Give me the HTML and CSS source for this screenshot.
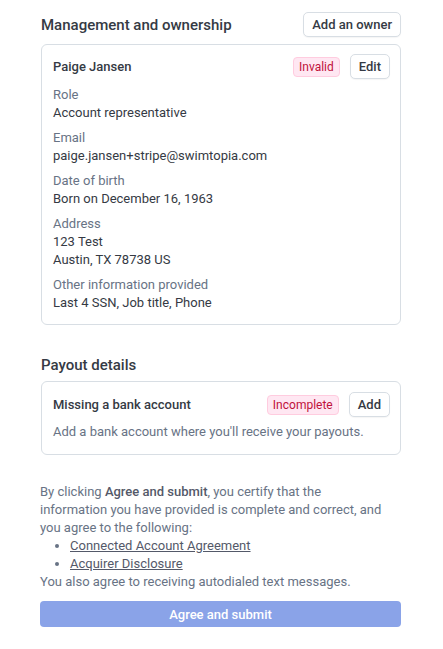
FILE: index.html
```html
<!DOCTYPE html>
<html lang="en">
<head>
<meta charset="utf-8">
<link rel="stylesheet" href="styles.css">
</head>
<body>
<main class="page">
  <section class="section">
    <div class="section-head">
      <h2 class="section-title">Management and ownership</h2>
      <button class="btn">Add an owner</button>
    </div>
    <div class="card">
      <div class="card-head">
        <div class="card-title">Paige Jansen</div>
        <div class="card-actions">
          <span class="badge">Invalid</span>
          <button class="btn">Edit</button>
        </div>
      </div>
      <div class="fields">
        <div class="field">
          <div class="label">Role</div>
          <div class="value">Account representative</div>
        </div>
        <div class="field">
          <div class="label">Email</div>
          <div class="value">paige.jansen+stripe@swimtopia.com</div>
        </div>
        <div class="field">
          <div class="label">Date of birth</div>
          <div class="value">Born on December 16, 1963</div>
        </div>
        <div class="field">
          <div class="label">Address</div>
          <div class="value">123 Test</div>
          <div class="value">Austin, TX 78738 US</div>
        </div>
        <div class="field">
          <div class="label">Other information provided</div>
          <div class="value">Last 4 SSN, Job title, Phone</div>
        </div>
      </div>
    </div>
  </section>

  <section class="section payout">
    <div class="section-head">
      <h2 class="section-title">Payout details</h2>
    </div>
    <div class="card card-payout">
      <div class="card-head">
        <div class="card-title">Missing a bank account</div>
        <div class="card-actions">
          <span class="badge">Incomplete</span>
          <button class="btn">Add</button>
        </div>
      </div>
      <p class="desc">Add a bank account where you'll receive your payouts.</p>
    </div>
  </section>

  <section class="terms">
    <p class="terms-lead">By clicking <strong>Agree and submit</strong>, you certify that the information you have provided is complete and correct, and you agree to the following:</p>
    <ul class="links">
      <li><a href="#">Connected Account Agreement</a></li>
      <li><a href="#">Acquirer Disclosure</a></li>
    </ul>
    <p>You also agree to receiving autodialed text messages.</p>
    <button class="submit">Agree and submit</button>
  </section>
</main>
</body>
</html>
```
FILE: styles.css
```css
* { box-sizing: border-box; }
html, body { margin: 0; padding: 0; background: #fff; }
body {
  font-family: Roboto, "Noto Sans", sans-serif;
  font-size: 13px;
  line-height: 18px;
  color: #353a44;
}
.page {
  padding: 12px 42px 0 40px;
}
.section-head {
  display: flex;
  align-items: center;
  justify-content: space-between;
  padding-left: 1px;
  min-height: 25px;
}
.section-title {
  margin: 0;
  font-size: 15px;
  font-weight: 500;
  color: #353a44;
}
.btn {
  font-family: inherit;
  font-size: 13px;
  font-weight: 500;
  color: #353a44;
  background: #fff;
  border: 1px solid #d8dee4;
  border-radius: 5px;
  height: 25px;
  padding: 0 8px;
  line-height: 23px;
  box-shadow: 0 1px 1px rgba(0,0,0,0.04);
}
.card {
  margin: 7px 0 0 1px;
  border: 1px solid #d8dee4;
  border-radius: 6px;
  padding: 9px 10px 12px 11px;
}
.card-head {
  display: flex;
  align-items: center;
  justify-content: space-between;
}
.card-title {
  font-weight: 500;
}
.card-actions {
  display: flex;
  align-items: center;
  gap: 10px;
}
.badge {
  display: inline-block;
  font-size: 12px;
  line-height: 18px;
  padding: 0 5px;
  color: #c0123c;
  background: #ffe7f2;
  border: 1px solid #ffccdf;
  border-radius: 4px;
}
.fields {
  margin-top: 7px;
  display: flex;
  flex-direction: column;
  gap: 7px;
}
.label { color: #687385; }
.value { color: #353a44; }
.payout { margin-top: 29px; }
.payout .section-head { min-height: 22px; }
.card-payout {
  margin-top: 5px;
  padding: 10px 10px 13px 11px;
}
.desc {
  margin: 6px 0 0;
  color: #687385;
}
.terms {
  margin-top: 28px;
  color: #687385;
}
.terms p { margin: 0; }
.terms-lead { max-width: 350px; }
.terms strong { color: #545969; font-weight: 500; }
.links {
  margin: 0;
  padding-left: 30px;
}
.links a { color: #545969; text-decoration: underline; }
.submit {
  margin-top: 10px;
  width: 100%;
  height: 26px;
  border: 0;
  border-radius: 4px;
  background: #8aa3e8;
  color: #fff;
  font-family: inherit;
  font-size: 13px;
  font-weight: 500;
}
```
